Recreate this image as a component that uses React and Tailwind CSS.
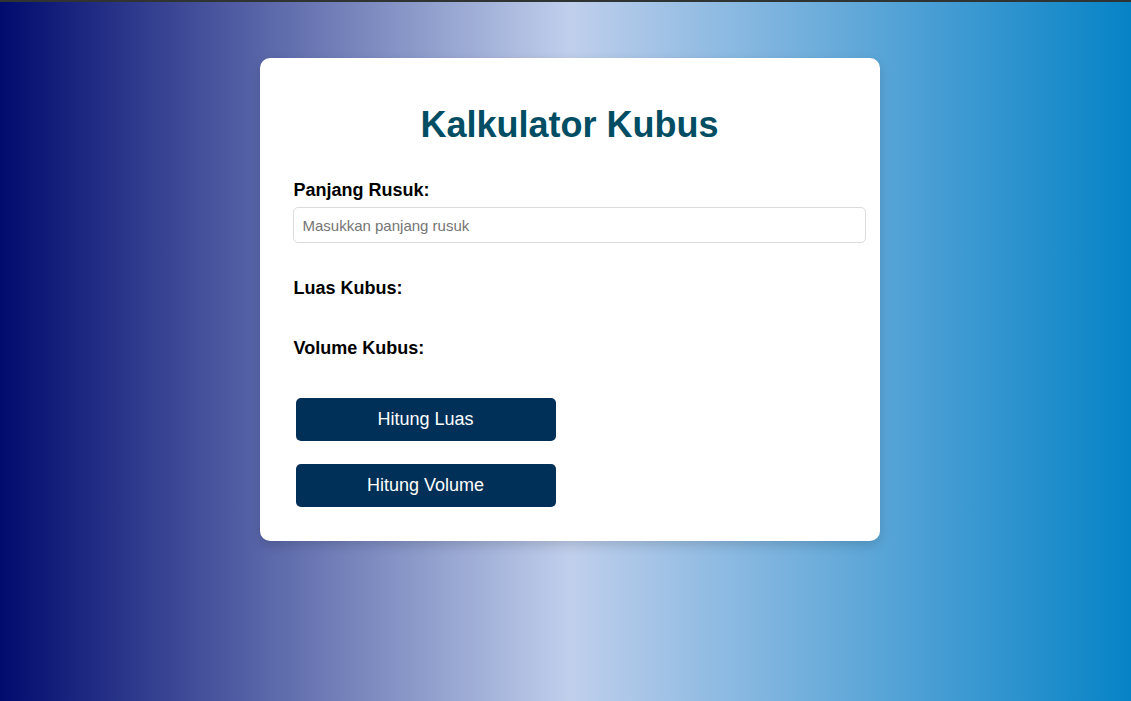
export default function App() {
  return (
    <div
      className="min-h-[701px] w-full border-t-2 border-[#2f3331] bg-[linear-gradient(to_right,#000b6e,#c0cfec_50.4%,#0683c6)] flex justify-center"
      style={{ fontFamily: '"Liberation Sans", Arial, sans-serif' }}
    >
      <div className="mt-[56px] ml-[8px] mb-auto w-[620px] h-[483px] bg-white rounded-[10px] shadow-[0_4px_12px_rgba(0,0,0,0.15)] pt-[46px] pl-[33px] pr-[14px] flex flex-col">
        <h1 className="text-[36px] leading-[42px] font-bold text-[#014d63] text-center pr-[19px]">
          Kalkulator Kubus
        </h1>
        <label className="mt-[34px] text-[18px] leading-[21px] font-bold text-black pl-[1px]">
          Panjang Rusuk:
        </label>
        <input
          type="text"
          placeholder="Masukkan panjang rusuk"
          className="mt-[6px] h-[36px] w-[573px] border border-[#dcdcdc] rounded-[5px] px-[9px] text-[15px] text-black placeholder:text-[#757575] outline-none"
        />
        <div className="mt-[35px] text-[18px] leading-[21px] font-bold text-black pl-[1px]">
          Luas Kubus:
        </div>
        <div className="mt-[39px] text-[18px] leading-[21px] font-bold text-black pl-[1px]">
          Volume Kubus:
        </div>
        <div className="mt-[39px] flex flex-col gap-[23px] pl-[3px]">
          <button className="w-[260px] h-[43px] bg-[#003057] text-white text-[18px] rounded-[5px]">
            Hitung Luas
          </button>
          <button className="w-[260px] h-[43px] bg-[#003057] text-white text-[18px] rounded-[5px]">
            Hitung Volume
          </button>
        </div>
      </div>
    </div>
  );
}
